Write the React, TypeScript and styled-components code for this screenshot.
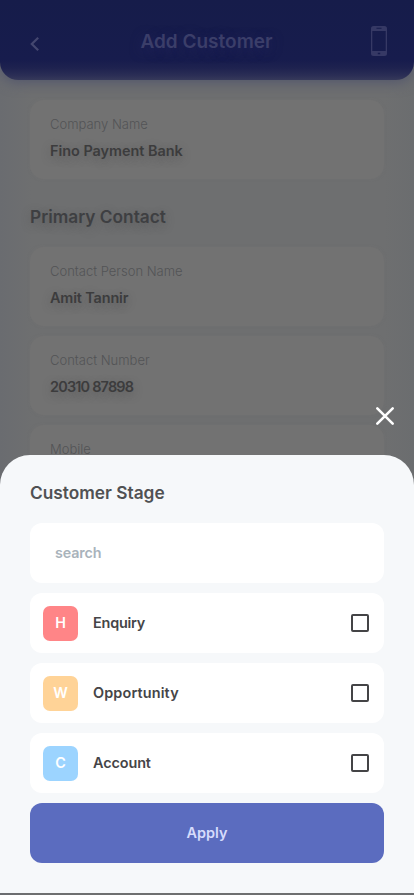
import React from "react";
import styled, { createGlobalStyle } from "styled-components";

const GlobalStyle = createGlobalStyle`
  * { box-sizing: border-box; }
  body { margin: 0; background: #6d6f73; font-family: Inter, "Liberation Sans", sans-serif; }
  button, input { font: inherit; border: 0; padding: 0; background: none; }
`;

const Screen = styled.div`
  position: relative;
  display: flex;
  flex-direction: column;
  width: 414px;
  height: 895px;
  overflow: hidden;
  background: linear-gradient(90deg, #6a6c70 0, #6e6f70 32px, #6e6f70 384px, #6b6d6f 100%);
`;

const Header = styled.header`
  flex: none;
  display: flex;
  align-items: center;
  justify-content: space-between;
  height: 80px;
  padding: 2px 26px 0 29px;
  border-radius: 0 0 18px 18px;
  color: #44476f;
  background: linear-gradient(#161c4a 0, #171c4d 60px, #1e224f 68px, #2a2d55 75px, #36395a 80px);
  box-shadow: 0 2px 14px #50546c;
`;

const HeaderTitle = styled.h1`
  margin: 1px 0 0 2px;
  font-size: 19px;
  font-weight: 600;
  line-height: 24px;
  color: #3b3e69;
  text-shadow: 0 3px 12px #20235a;
`;

const IconButton = styled.button<{ $drop?: number }>`
  display: flex;
  color: inherit;
  margin-top: ${(p) => p.$drop ?? 0}px;
`;

const Content = styled.main`
  display: flex;
  flex-direction: column;
  gap: 10px;
  padding: 20px 30px 0;
`;

const Field = styled.section`
  display: flex;
  flex-direction: column;
  height: 79px;
  padding: 15px 20px 0;
  border-radius: 14px;
  background: #727272;
  box-shadow: 0 0 3px rgba(114, 114, 114, 0.6);
`;

const FieldLabel = styled.span`
  font-size: 13px;
  font-weight: 300;
  line-height: 18px;
  color: #535456;
`;

const FieldValue = styled.span<{ $track: number }>`
  margin-top: 9px;
  font-size: 14.45px;
  font-weight: 600;
  line-height: 18px;
  letter-spacing: ${(p) => p.$track}px;
  color: #3c3c3d;
  text-shadow: 0 3px 10px rgba(60, 60, 64, 0.35);
`;

const SectionTitle = styled.h2`
  margin: 17px 0 9px;
  font-size: 17.3px;
  font-weight: 600;
  line-height: 22px;
  color: #3e3f42;
  text-shadow: 0 3px 10px rgba(60, 60, 64, 0.35);
`;

const CloseButton = styled.button`
  position: absolute;
  top: 406px;
  left: 375px;
  display: flex;
`;

const Sheet = styled.section`
  position: absolute;
  left: 0;
  right: 0;
  bottom: 2px;
  display: flex;
  flex-direction: column;
  gap: 10px;
  height: 438px;
  padding: 27px 30px 0;
  border-radius: 30px 30px 0 0;
  background: #f6f8fa;
`;

const SheetTitle = styled.h2`
  margin: 0 0 9px;
  font-size: 17.3px;
  font-weight: 600;
  line-height: 22px;
  color: #505153;
`;

const SearchInput = styled.input`
  flex: none;
  width: 100%;
  height: 60px;
  padding: 0 25px 2px !important;
  border-radius: 12px;
  background: #fff;
  font-size: 14.3px !important;
  font-weight: 600 !important;
  letter-spacing: -0.1px;
  outline: none;
  &::placeholder { color: #a9b3bb; opacity: 1; }
`;

const Option = styled.label`
  flex: none;
  display: flex;
  align-items: center;
  height: 60px;
  padding: 0 15px 0 13px;
  border-radius: 12px;
  background: #fff;
`;

const Badge = styled.span<{ $color: string }>`
  display: flex;
  align-items: center;
  justify-content: center;
  width: 35px;
  height: 35px;
  margin-top: 1px;
  padding-bottom: 2px;
  border-radius: 7px;
  background: ${(p) => p.$color};
  color: #fff;
  font-size: 14.3px;
  font-weight: 600;
`;

const OptionName = styled.span<{ $track: number }>`
  flex: 1;
  margin-left: 15px;
  padding-bottom: 2px;
  font-size: 14.45px;
  font-weight: 600;
  letter-spacing: ${(p) => p.$track}px;
  color: #454547;
`;

const Checkbox = styled.input.attrs({ type: "checkbox" })`
  appearance: none;
  width: 18px;
  height: 18px;
  margin: 0;
  border: 2px solid #444446 !important;
  border-radius: 2px;
`;

const ApplyButton = styled.button`
  flex: none;
  height: 60px;
  padding-bottom: 2px !important;
  border-radius: 12px;
  background: #5b6cbf;
  color: #d6dcfc;
  font-size: 14.45px;
  font-weight: 600;
`;

const contacts = [
  { label: "Contact Person Name", value: "Amit Tannir", track: -0.15 },
  { label: "Contact Number", value: "20310 87898", track: -0.8 },
  { label: "Mobile", value: "", track: 0 },
];

const stages = [
  { letter: "H", name: "Enquiry", color: "#ff8587", track: -0.22 },
  { letter: "W", name: "Opportunity", color: "#ffd397", track: 0.13 },
  { letter: "C", name: "Account", color: "#9cd4ff", track: -0.12 },
];

export default function App() {
  return (
    <Screen>
      <GlobalStyle />
      <Header>
        <IconButton $drop={5} aria-label="Back">
          <svg width="12" height="16" viewBox="0 0 12 16" fill="none" stroke="currentColor" strokeWidth="2.2">
            <path d="M9.200 1.700 2.800 8l6.400 6.300" />
          </svg>
        </IconButton>
        <HeaderTitle>Add Customer</HeaderTitle>
        <IconButton aria-label="Phone">
          <svg width="18" height="32" viewBox="0 0 18 32">
            <path
              fill="#363965"
              fillRule="evenodd"
              d="M3.500 1h11A2.500 2.500 0 0 1 17 3.500v25a2.500 2.500 0 0 1-2.500 2.500h-11A2.500 2.500 0 0 1 1 28.500v-25A2.500 2.500 0 0 1 3.500 1ZM2.300 6v20h13.400V6ZM6.500 2.800v1h5v-1ZM7.800 27.700v1.600h2.400v-1.600Z"
            />
          </svg>
        </IconButton>
      </Header>
      <Content>
        <Field>
          <FieldLabel>Company Name</FieldLabel>
          <FieldValue $track={-0.03}>Fino Payment Bank</FieldValue>
        </Field>
        <SectionTitle>Primary Contact</SectionTitle>
        {contacts.map((c) => (
          <Field key={c.label}>
            <FieldLabel>{c.label}</FieldLabel>
            <FieldValue $track={c.track}>{c.value}</FieldValue>
          </Field>
        ))}
      </Content>
      <CloseButton aria-label="Close">
        <svg width="20" height="20" viewBox="0 0 20 20" fill="none" stroke="#fff" strokeWidth="2.6" strokeLinecap="round">
          <path d="m2.300 2.300 15.400 15.400M17.700 2.300 2.300 17.700" />
        </svg>
      </CloseButton>
      <Sheet>
        <SheetTitle>Customer Stage</SheetTitle>
        <SearchInput placeholder="search" />
        {stages.map((s) => (
          <Option key={s.name}>
            <Badge $color={s.color}>{s.letter}</Badge>
            <OptionName $track={s.track}>{s.name}</OptionName>
            <Checkbox />
          </Option>
        ))}
        <ApplyButton>Apply</ApplyButton>
      </Sheet>
    </Screen>
  );
}
